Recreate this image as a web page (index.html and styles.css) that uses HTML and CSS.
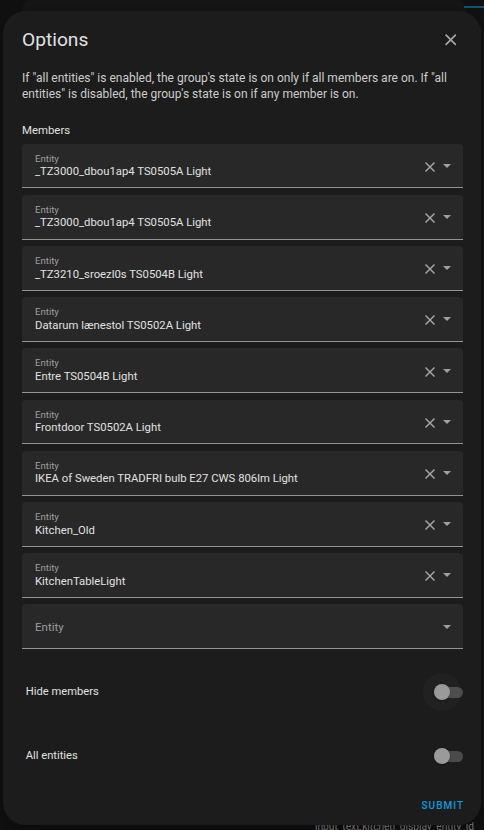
FILE: index.html
```html
<!DOCTYPE html>
<html lang="en">
<head>
<meta charset="utf-8">
<title>Options</title>
<link rel="stylesheet" href="styles.css">
</head>
<body>
<div class="backdrop">
  <div class="bg-card"></div>
  <div class="bg-accent"></div>
  <div class="bg-text">input_text.kitchen_display_entity_id</div>
</div>
<div class="dialog">
  <header class="dlg-head">
    <h2 class="dlg-title">Options</h2>
    <button class="close-btn" aria-label="Close">
      <svg viewBox="5 5 14 14" width="11.5" height="11.5"><path fill="currentColor" d="M19,6.41L17.59,5L12,10.59L6.41,5L5,6.41L10.59,12L5,17.59L6.41,19L12,13.41L17.59,19L19,17.59L13.41,12L19,6.41Z"/></svg>
    </button>
  </header>
  <p class="desc">If "all entities" is enabled, the group's state is on only if all members are on. If "all entities" is disabled, the group's state is on if any member is on.</p>
  <div class="section-label">Members</div>
  <div class="fields">
    <div class="field"><div class="field-text"><span class="f-label">Entity</span><span class="f-value">_TZ3000_dbou1ap4 TS0505A Light</span></div><svg class="ic-clear" viewBox="5 5 14 14"><path fill="currentColor" d="M19,6.41L17.59,5L12,10.59L6.41,5L5,6.41L10.59,12L5,17.59L6.41,19L12,13.41L17.59,19L19,17.59L13.41,12L19,6.41Z"/></svg><svg class="ic-drop" viewBox="7 10 10 5"><path fill="currentColor" d="M7,10L12,15L17,10H7Z"/></svg></div>
    <div class="field"><div class="field-text"><span class="f-label">Entity</span><span class="f-value">_TZ3000_dbou1ap4 TS0505A Light</span></div><svg class="ic-clear" viewBox="5 5 14 14"><path fill="currentColor" d="M19,6.41L17.59,5L12,10.59L6.41,5L5,6.41L10.59,12L5,17.59L6.41,19L12,13.41L17.59,19L19,17.59L13.41,12L19,6.41Z"/></svg><svg class="ic-drop" viewBox="7 10 10 5"><path fill="currentColor" d="M7,10L12,15L17,10H7Z"/></svg></div>
    <div class="field"><div class="field-text"><span class="f-label">Entity</span><span class="f-value">_TZ3210_sroezl0s TS0504B Light</span></div><svg class="ic-clear" viewBox="5 5 14 14"><path fill="currentColor" d="M19,6.41L17.59,5L12,10.59L6.41,5L5,6.41L10.59,12L5,17.59L6.41,19L12,13.41L17.59,19L19,17.59L13.41,12L19,6.41Z"/></svg><svg class="ic-drop" viewBox="7 10 10 5"><path fill="currentColor" d="M7,10L12,15L17,10H7Z"/></svg></div>
    <div class="field"><div class="field-text"><span class="f-label">Entity</span><span class="f-value">Datarum lænestol TS0502A Light</span></div><svg class="ic-clear" viewBox="5 5 14 14"><path fill="currentColor" d="M19,6.41L17.59,5L12,10.59L6.41,5L5,6.41L10.59,12L5,17.59L6.41,19L12,13.41L17.59,19L19,17.59L13.41,12L19,6.41Z"/></svg><svg class="ic-drop" viewBox="7 10 10 5"><path fill="currentColor" d="M7,10L12,15L17,10H7Z"/></svg></div>
    <div class="field"><div class="field-text"><span class="f-label">Entity</span><span class="f-value">Entre TS0504B Light</span></div><svg class="ic-clear" viewBox="5 5 14 14"><path fill="currentColor" d="M19,6.41L17.59,5L12,10.59L6.41,5L5,6.41L10.59,12L5,17.59L6.41,19L12,13.41L17.59,19L19,17.59L13.41,12L19,6.41Z"/></svg><svg class="ic-drop" viewBox="7 10 10 5"><path fill="currentColor" d="M7,10L12,15L17,10H7Z"/></svg></div>
    <div class="field"><div class="field-text"><span class="f-label">Entity</span><span class="f-value">Frontdoor TS0502A Light</span></div><svg class="ic-clear" viewBox="5 5 14 14"><path fill="currentColor" d="M19,6.41L17.59,5L12,10.59L6.41,5L5,6.41L10.59,12L5,17.59L6.41,19L12,13.41L17.59,19L19,17.59L13.41,12L19,6.41Z"/></svg><svg class="ic-drop" viewBox="7 10 10 5"><path fill="currentColor" d="M7,10L12,15L17,10H7Z"/></svg></div>
    <div class="field"><div class="field-text"><span class="f-label">Entity</span><span class="f-value">IKEA of Sweden TRADFRI bulb E27 CWS 806lm Light</span></div><svg class="ic-clear" viewBox="5 5 14 14"><path fill="currentColor" d="M19,6.41L17.59,5L12,10.59L6.41,5L5,6.41L10.59,12L5,17.59L6.41,19L12,13.41L17.59,19L19,17.59L13.41,12L19,6.41Z"/></svg><svg class="ic-drop" viewBox="7 10 10 5"><path fill="currentColor" d="M7,10L12,15L17,10H7Z"/></svg></div>
    <div class="field"><div class="field-text"><span class="f-label">Entity</span><span class="f-value">Kitchen_Old</span></div><svg class="ic-clear" viewBox="5 5 14 14"><path fill="currentColor" d="M19,6.41L17.59,5L12,10.59L6.41,5L5,6.41L10.59,12L5,17.59L6.41,19L12,13.41L17.59,19L19,17.59L13.41,12L19,6.41Z"/></svg><svg class="ic-drop" viewBox="7 10 10 5"><path fill="currentColor" d="M7,10L12,15L17,10H7Z"/></svg></div>
    <div class="field"><div class="field-text"><span class="f-label">Entity</span><span class="f-value">KitchenTableLight</span></div><svg class="ic-clear" viewBox="5 5 14 14"><path fill="currentColor" d="M19,6.41L17.59,5L12,10.59L6.41,5L5,6.41L10.59,12L5,17.59L6.41,19L12,13.41L17.59,19L19,17.59L13.41,12L19,6.41Z"/></svg><svg class="ic-drop" viewBox="7 10 10 5"><path fill="currentColor" d="M7,10L12,15L17,10H7Z"/></svg></div>
    <div class="field field-empty"><div class="field-text"><span class="f-placeholder">Entity</span></div><svg class="ic-drop" viewBox="7 10 10 5"><path fill="currentColor" d="M7,10L12,15L17,10H7Z"/></svg></div>
  </div>
  <div class="toggle-row row-first">
    <span class="toggle-label">Hide members</span>
    <span class="switch"><span class="track"></span><span class="halo"></span><span class="thumb"></span></span>
  </div>
  <div class="toggle-row">
    <span class="toggle-label">All entities</span>
    <span class="switch"><span class="track"></span><span class="thumb"></span></span>
  </div>
  <div class="actions">
    <button class="submit">SUBMIT</button>
  </div>
</div>
</body>
</html>
```

FILE: styles.css
```css
* { box-sizing: border-box; }
html, body {
  margin: 0;
  padding: 0;
  width: 484px;
  height: 830px;
  overflow: hidden;
  background: #111111;
  font-family: Roboto, "Noto Sans", sans-serif;
}
.backdrop {
  position: relative;
  width: 484px;
  height: 830px;
}
.bg-card {
  position: absolute;
  left: 22px;
  top: -1px;
  width: 444px;
  height: 60px;
  background: #161616;
  border-radius: 12px;
}
.bg-accent {
  position: absolute;
  left: 464px;
  top: 6px;
  width: 20px;
  height: 2px;
  background: #11556e;
}
.bg-text {
  position: absolute;
  left: 315px;
  top: 820px;
  font-size: 10.2px;
  line-height: 14px;
  color: #8a8a8a;
  white-space: nowrap;
}
.dialog {
  position: absolute;
  left: 3px;
  top: 11px;
  width: 478px;
  height: 814px;
  background: #1c1c1c;
  border-radius: 22.4px;
  padding: 17px 18px 0 19px;
  display: flex;
  flex-direction: column;
  box-shadow: 0 6px 20px rgba(0,0,0,0.4);
}
.dlg-head {
  display: flex;
  align-items: center;
  justify-content: space-between;
  height: 24px;
}
.dlg-title {
  margin: 0;
  font-size: 19.2px;
  line-height: 24px;
  font-weight: 400;
  color: #e1e1e1;
}
.close-btn {
  background: none;
  border: 0;
  padding: 0;
  margin-right: 7px;
  color: #a8a8a8;
  display: flex;
}
.desc {
  margin: 17.6px 0 0;
  font-size: 12px;
  line-height: 16px;
  color: #cccccc;
}
.section-label {
  margin-top: 20.3px;
  font-size: 11.4px;
  line-height: 16px;
  color: #e1e1e1;
}
.fields {
  margin-top: 5.8px;
  display: flex;
  flex-direction: column;
  gap: 6.4px;
}
.field {
  height: 44.8px;
  background: #282828;
  border-radius: 4px 4px 0 0;
  border-bottom: 1px solid #939393;
  display: flex;
  align-items: center;
  padding: 0 12px 0 13px;
}
.field-text {
  flex: 1;
  display: flex;
  flex-direction: column;
  align-self: flex-start;
  padding-top: 9px;
}
.f-label {
  font-size: 9.6px;
  line-height: 12px;
  color: #9e9e9e;
}
.f-value {
  font-size: 11.3px;
  line-height: 14px;
  color: #e1e1e1;
  margin-top: 0.5px;
}
.field-empty .field-text {
  align-self: center;
  padding-top: 0;
}
.f-placeholder {
  font-size: 11.5px;
  line-height: 14px;
  color: #9c9c9c;
  margin-top: 2px;
}
.ic-clear {
  width: 10px;
  height: 10px;
  color: #a6a6a6;
  margin-top: 2.5px;
  margin-right: 8.3px;
}
.ic-drop {
  width: 8px;
  height: 4px;
  color: #a0a0a0;
  margin-top: 0.5px;
}
.toggle-row {
  height: 64px;
  display: flex;
  align-items: center;
  justify-content: space-between;
  padding-left: 3.7px;
}
.row-first { margin-top: 11px; }
.toggle-label {
  font-size: 11.2px;
  line-height: 14px;
  color: #e1e1e1;
}
.switch {
  position: relative;
  width: 28.8px;
  height: 16px;
  display: block;
}
.track {
  position: absolute;
  left: 0;
  top: 2.4px;
  width: 28.8px;
  height: 11.2px;
  border-radius: 5.6px;
  background: #4a4a4a;
}
.halo {
  position: absolute;
  left: -11px;
  top: -11px;
  width: 38px;
  height: 38px;
  border-radius: 50%;
  background: rgba(255,255,255,0.025);
}
.thumb {
  position: absolute;
  left: 0;
  top: 0;
  width: 16px;
  height: 16px;
  border-radius: 50%;
  background: #9a9a9a;
  box-shadow: 0 1px 2px rgba(0,0,0,0.3);
}
.actions {
  margin-top: auto;
  padding-bottom: 12px;
  display: flex;
  justify-content: flex-end;
}
.submit {
  background: none;
  border: 0;
  padding: 0;
  font-family: Roboto, sans-serif;
  font-size: 10px;
  font-weight: 500;
  letter-spacing: 1px;
  margin-right: -1px;
  color: #0a9be0;
  line-height: 14px;
}
```
